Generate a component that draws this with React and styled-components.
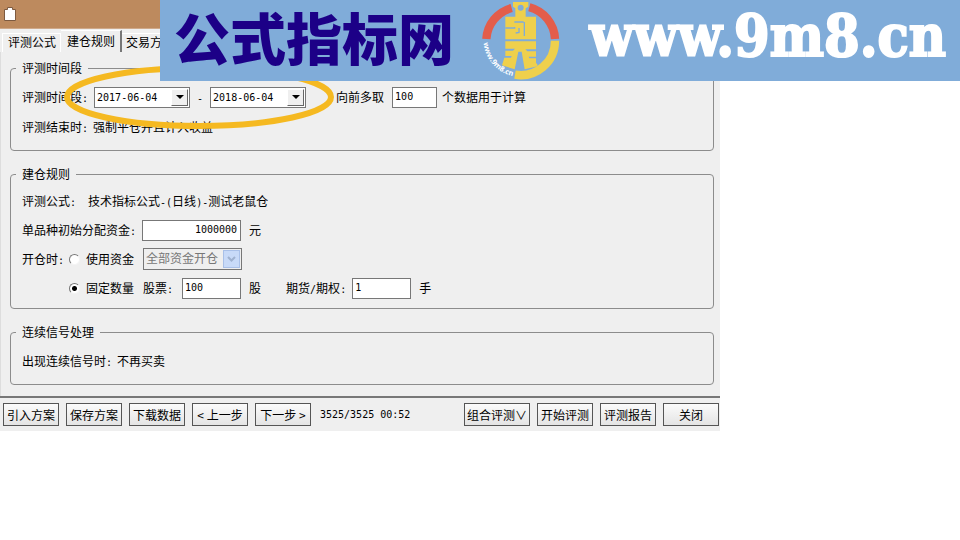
import React, { useState } from "react";
import styled, { createGlobalStyle } from "styled-components";

const GlobalStyle = createGlobalStyle`
  * {
    box-sizing: border-box;
  }
  body {
    margin: 0;
    background: #ffffff;
    color: #000000;
    font-family: "Noto Sans CJK SC", sans-serif;
    font-size: 12px;
    line-height: 16px;
  }
`;

const Page = styled.div`
  position: relative;
`;

const Window = styled.main`
  width: 75%;
  min-width: 640px;
  background: #efefef;
`;

const TitleBar = styled.header`
  display: flex;
  align-items: center;
  height: 29px;
  padding: 0 4px;
  background: #bd8a5e;
  border-bottom: 1px solid #cfa98a;
`;

const Tabs = styled.nav`
  display: flex;
  align-items: flex-end;
  height: 23px;
  padding-left: 2px;
`;

const Tab = styled.button`
  height: ${(props) => (props.$active ? "22px" : "19px")};
  padding: ${(props) => (props.$active ? "0 5px 2px 6px" : "0 4px 2px 5px")};
  border: 0;
  border-top: 1px solid #ffffff;
  border-left: ${(props) => (props.$active ? "0" : "1px solid #ffffff")};
  border-right: ${(props) =>
    props.$active ? "2px solid #777777" : "1px solid #ffffff"};
  background: #efefef;
  color: inherit;
  font: inherit;
  line-height: 16px;
  white-space: nowrap;
  &:last-child {
    padding: 0 0 2px 4px;
    border-left: 0;
  }
`;

const Body = styled.form`
  display: flex;
  flex-direction: column;
  gap: 15px;
  padding: 8px 6px 11px 9px;
  border-left: 1px solid #dddddd;
`;

const Group = styled.fieldset`
  min-width: 0;
  margin: 0;
  padding: 0 5px;
  border: 1px solid #8c8c8c;
  border-radius: 4px;
`;

const Legend = styled.legend`
  padding: 0 6px;
`;

const Rows = styled.div`
  display: flex;
  flex-direction: column;
  gap: ${(props) => (props.$dense ? "7px" : "8px")};
  padding: ${(props) => (props.$dense ? "8px 6px 9px" : "10px 6px 12px")};
`;

const Row = styled.div`
  display: flex;
  align-items: center;
  height: 22px;
  white-space: nowrap;
`;

const Half = styled.span`
  font-family: "DejaVu Sans Mono", monospace;
  font-size: 10px;
  line-height: 1;
`;

const Label = styled.label`
  margin-right: ${(props) => props.$gap || 6}px;
`;

const Text = styled.span`
  margin-left: ${(props) => props.$gap || 0}px;
`;

const Lead = styled.span`
  width: 47px;
`;

const Choice = styled.label`
  display: flex;
  align-items: center;
  gap: 6px;
  width: 74px;
`;

const Radio = styled.input`
  appearance: none;
  width: 11px;
  height: 11px;
  margin: 0;
  border: 1px solid;
  border-color: #777777 #f4f4f4 #f4f4f4 #777777;
  border-radius: 50%;
  background: #ffffff;
  &:checked {
    background: radial-gradient(circle, #000000 2px, #ffffff 3px);
  }
`;

const Input = styled.input`
  width: ${(props) => props.$width}px;
  height: 21px;
  padding: 0 3px 2px 2px;
  border: 1px solid #777777;
  background: #ffffff;
  color: #000000;
  font-family: "DejaVu Sans Mono", monospace;
  font-size: 10px;
  text-align: ${(props) => (props.$right ? "right" : "left")};
`;

const SelectBox = styled.span`
  position: relative;
  display: flex;
  width: ${(props) => props.$width}px;
`;

const Select = styled.select`
  appearance: none;
  width: 100%;
  height: 21px;
  padding: 0 20px 0 2px;
  border: 1px solid #777777;
  border-radius: 0;
  background: #ffffff;
  color: #000000;
  font-family: "DejaVu Sans Mono", "Noto Sans CJK SC", monospace;
  font-size: 10px;
  opacity: 1;
  &:disabled {
    height: 22px;
    background: #efefef;
    color: #777777;
    font-size: 12px;
  }
`;

const Drop = styled.span`
  position: absolute;
  top: 2px;
  right: 2px;
  bottom: 2px;
  display: grid;
  place-items: center;
  width: 17px;
  border: 1px solid;
  border-color: ${(props) =>
    props.$off ? "#a9c0e8" : "#ffffff #666666 #666666 #ffffff"};
  background: ${(props) => (props.$off ? "#c8daf8" : "#efefef")};
  pointer-events: none;
`;

const Footer = styled.footer`
  display: flex;
  align-items: center;
  gap: 7px;
  height: 35px;
  padding: 0 1px 0 3px;
  border-top: 2px solid #777777;
`;

const Button = styled.button`
  min-width: 56px;
  height: 23px;
  padding: 0 2px;
  border: 1px solid #555555;
  background: linear-gradient(#fbfbfb, #e4e4e4);
  color: #000000;
  font: inherit;
  line-height: 20px;
  white-space: nowrap;
`;

const Status = styled(Half)`
  flex: 1;
  padding-left: 2px;
  white-space: nowrap;
`;

const Marker = styled.svg`
  position: absolute;
  top: 60px;
  left: 60px;
  pointer-events: none;
`;

const Banner = styled.aside`
  position: absolute;
  top: 0;
  left: 160px;
  right: 0;
  display: flex;
  align-items: center;
  height: 81px;
  padding: 0 14px 10px 14px;
  background: #80acd9;
  white-space: nowrap;
`;

const SiteName = styled.strong`
  width: 301px;
  color: #1c0087;
  font-size: 56px;
  font-weight: 900;
  line-height: 72px;
`;

const SiteLink = styled.a`
  margin-left: auto;
  color: #ffffff;
  font-family: "DejaVu Serif Condensed", "DejaVu Serif", serif;
  font-size: 57px;
  font-weight: 700;
  line-height: 68px;
  text-decoration: none;
  -webkit-text-stroke: 2px #ffffff;
`;

const LogoDrawing = styled.svg`
  align-self: flex-start;
  flex: none;
  overflow: visible;
`;

const ClipboardIcon = () => (
  <svg width="13" height="14" viewBox="0 0 13 14" aria-hidden="true">
    <path
      d="M.5 2.5h3v-2h5v2h3v11H.5z"
      fill="#ffffff"
      stroke="#7d5a40"
    />
  </svg>
);

const Arrow = () => (
  <svg width="8" height="4" viewBox="0 0 8 4" aria-hidden="true">
    <path d="M0 0h8L4 4z" fill="#000000" />
  </svg>
);

const Chevron = () => (
  <svg width="9" height="6" viewBox="0 0 9 6" aria-hidden="true">
    <path d="M1 1l3.5 3.5L8 1" fill="none" stroke="#9fb2d0" strokeWidth="2" />
  </svg>
);

const Logo = () => (
  <LogoDrawing width="95" height="81" viewBox="0 0 285 243" aria-hidden="true">
    <g fill="none" strokeWidth="25">
      <path d="M34 117A103 103 0 0 1 110 24" stroke="#e35d4b" />
      <path d="M163 22A103 103 0 0 1 240 117" stroke="#e35d4b" />
      <path d="M240 122A103 103 0 0 1 120 224" stroke="#efd04c" />
    </g>
    <path
      fill="#efd04c"
      fillRule="evenodd"
      d="M114 6h46v14l-8 5v25h31v68H91V50h30V25l-7-5zM137 14a9 9 0 1 0 0 18a9 9 0 1 0 0-18z"
    />
    <path
      fill="#efd04c"
      d="M91 124h92v24h-32l6 6h26v16h-22l2 5h20v14l4 4v6l-38 9-9-53h-10l-11 53-38-12 7-23h20l2-5H91v-16h23l6-6H91z"
    />
    <path
      d="M91 84h28v-3M118 66h28M148 66v42M122 99l10-2v-13"
      fill="none"
      stroke="#80acd9"
      strokeWidth="4"
    />
    <path id="ring" d="M26 128A111 111 0 0 0 128 230" fill="none" />
    <text
      fill="#ffffff"
      fontFamily="Open Sans, sans-serif"
      fontSize="22"
      fontWeight="700"
    >
      <textPath href="#ring">www.9m8.cn</textPath>
    </text>
  </LogoDrawing>
);

const DateSelect = ({ id, value, label }) => (
  <SelectBox $width={96}>
    <Select id={id} aria-label={label} defaultValue={value}>
      <option>{value}</option>
    </Select>
    <Drop>
      <Arrow />
    </Drop>
  </SelectBox>
);

const tabs = ["评测公式", "建仓规则", "交易方"];
const steps = ["引入方案", "保存方案", "下载数据", "< 上一步", "下一步 >"];
const actions = ["组合评测∨", "开始评测", "评测报告", "关闭"];

const App = () => {
  const [tab, setTab] = useState("建仓规则");
  const [mode, setMode] = useState("fixed");

  return (
    <Page>
      <GlobalStyle />
      <Window>
        <TitleBar>
          <ClipboardIcon />
        </TitleBar>
        <Tabs>
          {tabs.map((t) => (
            <Tab key={t} type="button" $active={t === tab} onClick={() => setTab(t)}>
              {t}
            </Tab>
          ))}
        </Tabs>
        <Body>
          <Group>
            <Legend>评测时间段</Legend>
            <Rows>
              <Row>
                <Label htmlFor="from">
                  评测时间段<Half>:</Half>
                </Label>
                <DateSelect id="from" value="2017-06-04" />
                <Text $gap={7}>
                  <Half>-</Half>
                </Text>
                <Text $gap={7} />
                <DateSelect id="to" label="结束日期" value="2018-06-04" />
                <Text $gap={30} />
                <Label htmlFor="count" $gap={8}>
                  向前多取
                </Label>
                <Input id="count" $width={45} defaultValue="100" />
                <Text $gap={5}>个数据用于计算</Text>
              </Row>
              <Row>
                <Text>
                  评测结束时<Half>:</Half>
                </Text>
                <Text $gap={5}>强制平仓并且计入收益</Text>
              </Row>
            </Rows>
          </Group>

          <Group>
            <Legend>建仓规则</Legend>
            <Rows $dense>
              <Row>
                <Text>
                  评测公式<Half>:</Half>
                </Text>
                <Text $gap={12}>
                  技术指标公式<Half>-(</Half>日线<Half>)-</Half>测试老鼠仓
                </Text>
              </Row>
              <Row>
                <Label htmlFor="funds">
                  单品种初始分配资金<Half>:</Half>
                </Label>
                <Input id="funds" $width={99} $right defaultValue="1000000" />
                <Text $gap={8}>元</Text>
              </Row>
              <Row>
                <Lead>
                  开仓时<Half>:</Half>
                </Lead>
                <Choice>
                  <Radio
                    type="radio"
                    name="mode"
                    checked={mode === "funds"}
                    onChange={() => setMode("funds")}
                  />
                  使用资金
                </Choice>
                <SelectBox $width={99}>
                  <Select aria-label="使用资金" disabled={mode !== "funds"}>
                    <option>全部资金开仓</option>
                  </Select>
                  <Drop $off>
                    <Chevron />
                  </Drop>
                </SelectBox>
              </Row>
              <Row>
                <Lead />
                <Choice>
                  <Radio
                    type="radio"
                    name="mode"
                    checked={mode === "fixed"}
                    onChange={() => setMode("fixed")}
                  />
                  固定数量
                </Choice>
                <Label htmlFor="stock" $gap={9}>
                  股票<Half>:</Half>
                </Label>
                <Input id="stock" $width={59} defaultValue="100" />
                <Text $gap={8}>股</Text>
                <Text $gap={25} />
                <Label htmlFor="futures">
                  期货<Half>/</Half>期权<Half>:</Half>
                </Label>
                <Input id="futures" $width={59} defaultValue="1" />
                <Text $gap={8}>手</Text>
              </Row>
            </Rows>
          </Group>

          <Group>
            <Legend>连续信号处理</Legend>
            <Rows>
              <Row>
                <Text>
                  出现连续信号时<Half>:</Half>
                </Text>
                <Text $gap={5}>不再买卖</Text>
              </Row>
            </Rows>
          </Group>
        </Body>
        <Footer>
          {steps.map((s) => (
            <Button key={s} type="button">
              {s}
            </Button>
          ))}
          <Status>3525/3525 00:52</Status>
          {actions.map((a) => (
            <Button key={a} type="button">
              {a}
            </Button>
          ))}
        </Footer>
      </Window>

      <Marker width="280" height="76" viewBox="0 0 280 76" aria-hidden="true">
        <ellipse
          cx="139"
          cy="37"
          rx="132"
          ry="29"
          fill="none"
          stroke="#f5b921"
          strokeWidth="6"
        />
      </Marker>

      <Banner>
        <SiteName>公式指标网</SiteName>
        <Logo />
        <SiteLink href="#home">www.9m8.cn</SiteLink>
      </Banner>
    </Page>
  );
};

export default App;
